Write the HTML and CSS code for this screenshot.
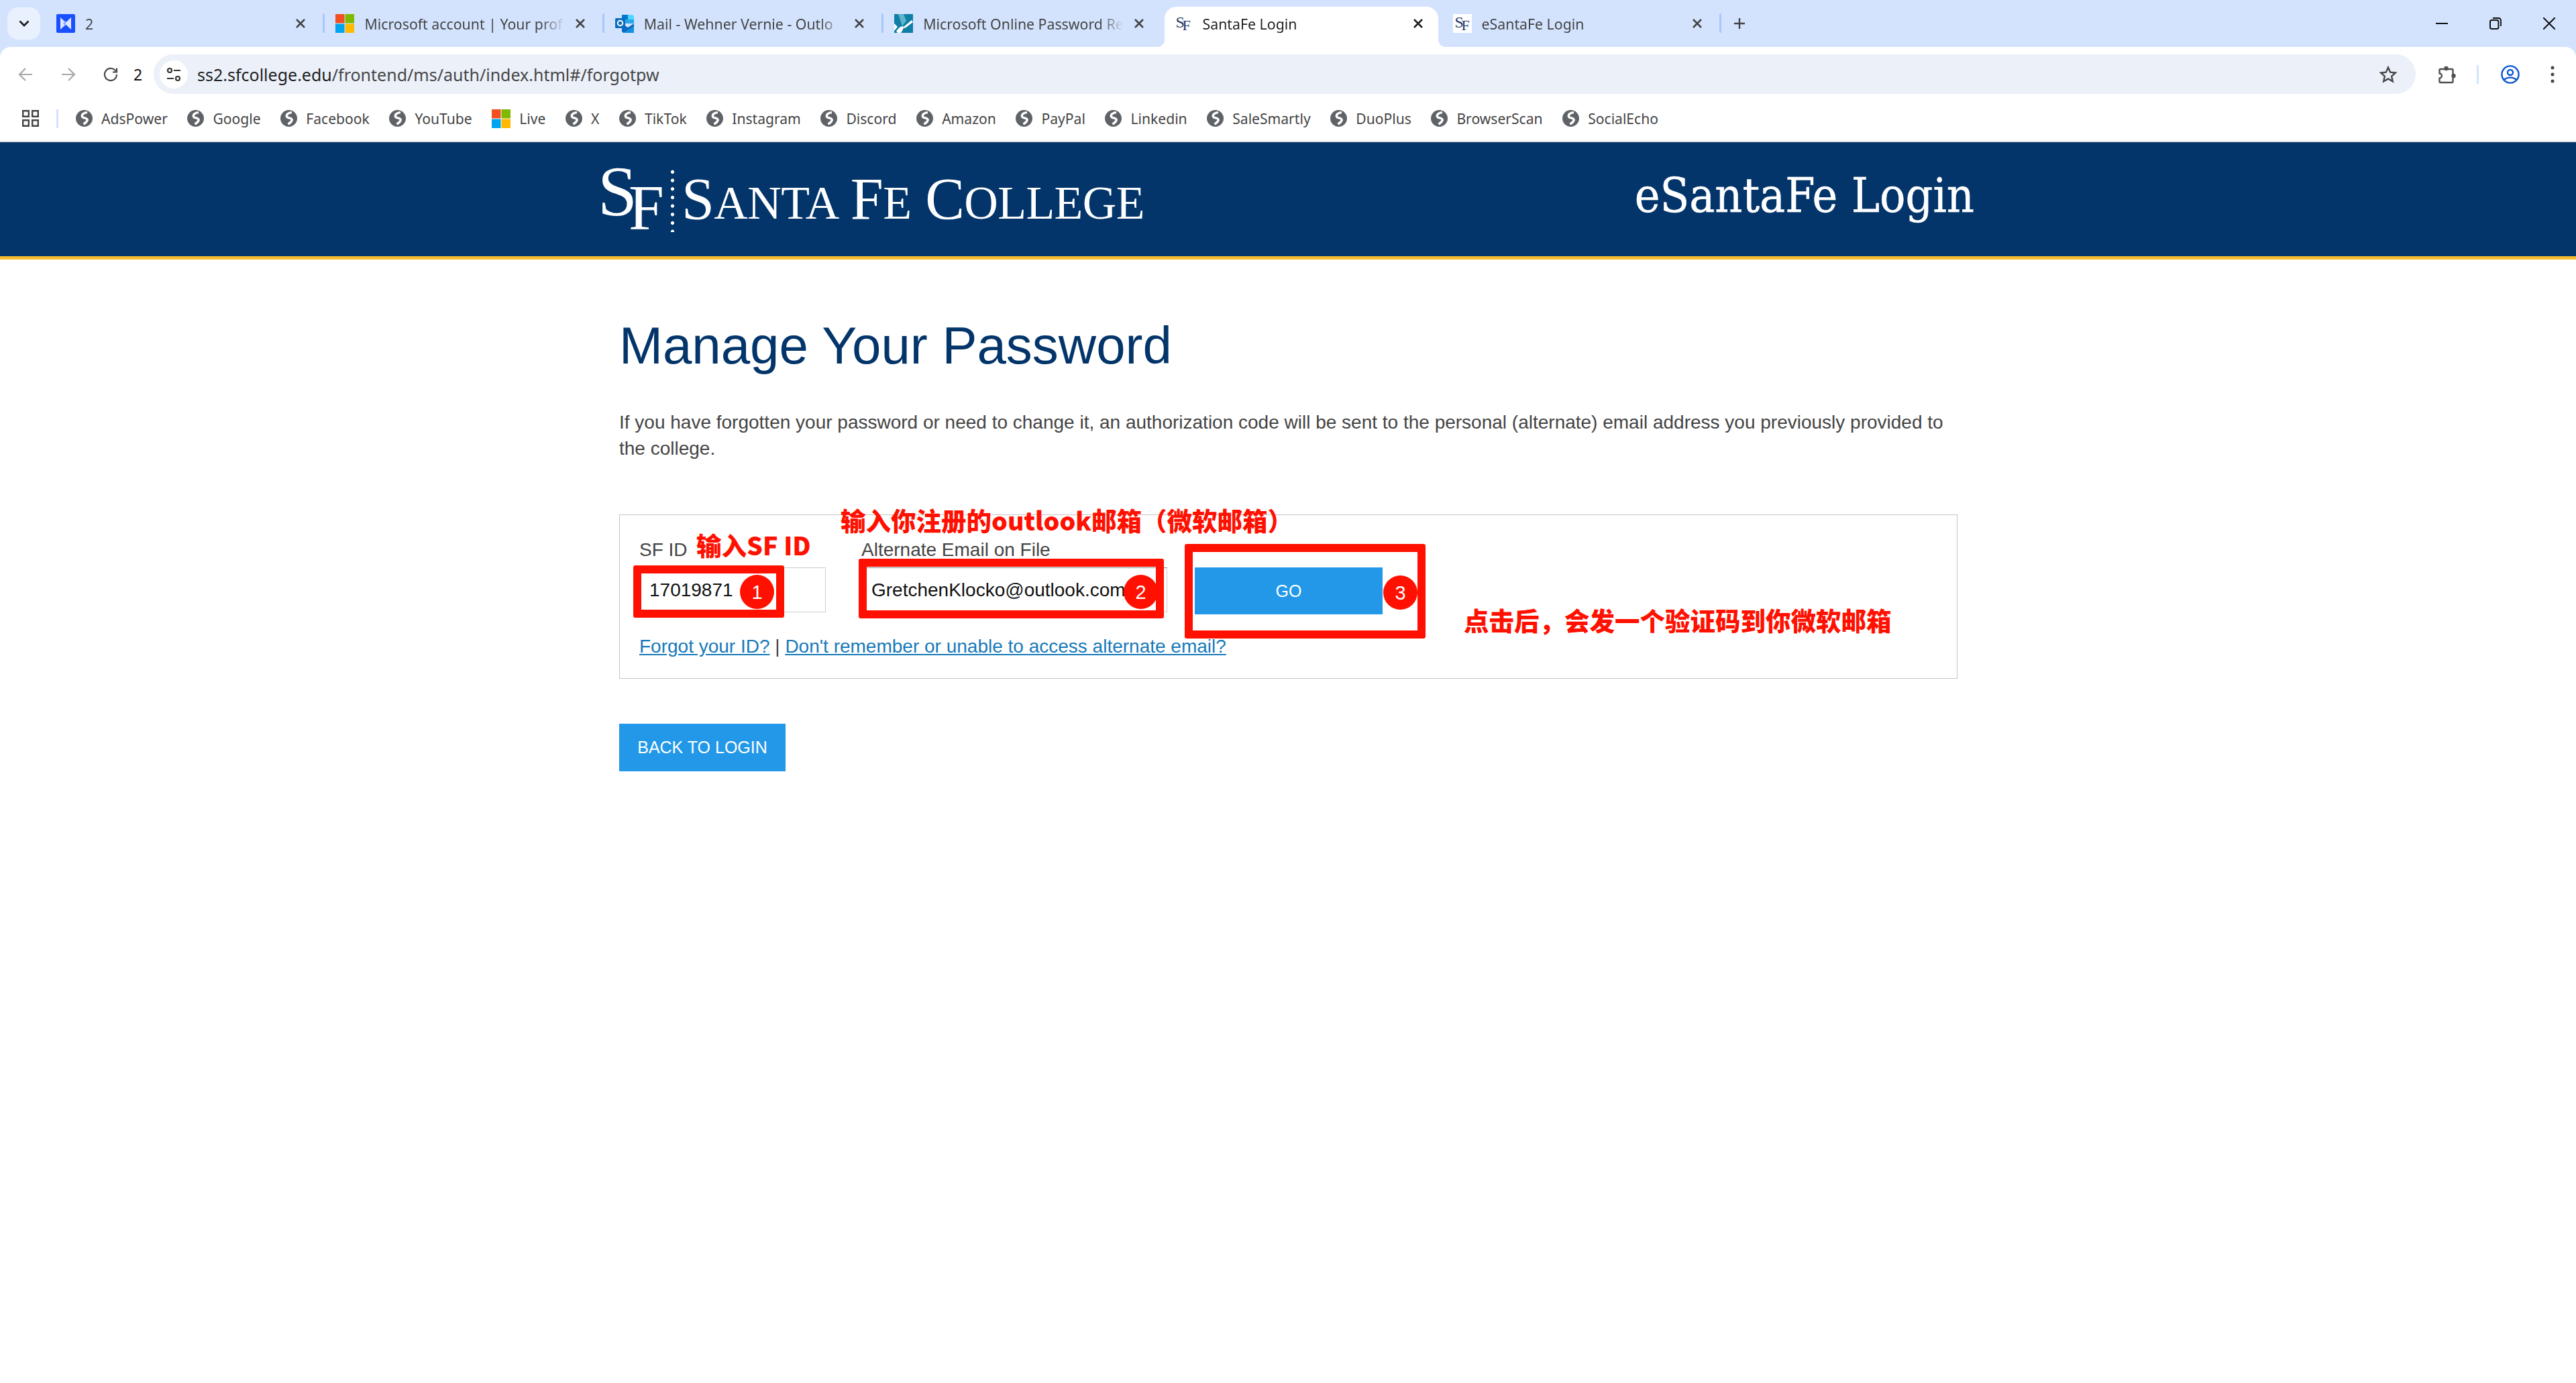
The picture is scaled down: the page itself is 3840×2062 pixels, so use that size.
FILE: index.html
```html
<!DOCTYPE html>
<html lang="en">
<head>
<meta charset="utf-8">
<title>SantaFe Login</title>
<link rel="stylesheet" href="styles.css">
</head>
<body>
<svg class="defs" width="0" height="0" aria-hidden="true">
  <symbol id="globe" viewBox="0 0 25 25">
    <circle cx="12.5" cy="12.5" r="12.5" fill="#5f6368"/>
    <path d="M17 3.6C12 4 8.6 6.6 9.4 9.6c.8 2.9 6.4 1.8 7.6 4.4 1 2.300-2.600 5.400-5.600 7" fill="none" stroke="#fff" stroke-width="3.400"/>
  </symbol>
  <symbol id="ms" viewBox="0 0 28 28">
    <rect width="13.500" height="13.500" fill="#f25022"/>
    <rect x="14.500" width="13.500" height="13.500" fill="#7fba00"/>
    <rect y="14.500" width="13.500" height="13.500" fill="#00a4ef"/>
    <rect x="14.500" y="14.500" width="13.500" height="13.500" fill="#ffb900"/>
  </symbol>
  <symbol id="close" viewBox="0 0 18 18">
    <path d="M3 3l12 12M15 3L3 15" fill="none" stroke="currentColor" stroke-width="2.600"/>
  </symbol>
</svg>

<header class="chrome">
  <div class="tabstrip">
    <div class="tab-list-btn">
      <svg class="chev" viewBox="0 0 16 10"><path d="M1.500 1.500L8 8l6.500-6.500" fill="none" stroke="#1f1f1f" stroke-width="2.800"/></svg>
    </div>
    <div class="tab sep">
      <svg class="fav" viewBox="0 0 28 28"><rect width="28" height="28" rx="2" fill="#1a4fff"/><path d="M6 5l8 7.500L22 5v18l-8-7.500L6 23z" fill="#dfe8ff"/><path d="M14 9.500l-4 4.500 4 4z" fill="#8fa9ff"/></svg>
      <span class="tab-label">2</span>
      <svg class="tab-close"><use href="#close"/></svg>
    </div>
    <div class="tab sep">
      <svg class="fav"><use href="#ms"/></svg>
      <span class="tab-label">Microsoft account | Your prof</span>
      <svg class="tab-close"><use href="#close"/></svg>
    </div>
    <div class="tab sep">
      <svg class="fav" viewBox="0 0 28 28"><path d="M10 1h15l3 3v10H10z" fill="#28a8ea"/><path d="M10 1h9v7h-9z" fill="#0078d4"/><path d="M19 1h6l3 3v4h-9z" fill="#50d9ff"/><path d="M10 14l9 6 9-6v14H12l-2-2z" fill="#0a6ac0"/><path d="M12 28l16-10v10z" fill="#1490df"/><rect y="6" width="15" height="15" rx="1.500" fill="#0f6cbd"/><circle cx="7.500" cy="13.500" r="3.700" fill="none" stroke="#fff" stroke-width="2"/></svg>
      <span class="tab-label">Mail - Wehner Vernie - Outlo</span>
      <svg class="tab-close"><use href="#close"/></svg>
    </div>
    <div class="tab">
      <svg class="fav" viewBox="0 0 28 28"><rect width="28" height="28" fill="#0f7fa6"/><path d="M6 0h8l4 10-6 8z" fill="#5fb4cc"/><path d="M26 9L14 19l-1-1-4 1-6 6 2 3h5l3-5 1-3 2 1L28 12z" fill="#fff"/><path d="M0 14l5 5-5 6z" fill="#fff"/></svg>
      <span class="tab-label">Microsoft Online Password Re</span>
      <svg class="tab-close"><use href="#close"/></svg>
    </div>
    <div class="tab active">
      <span class="fav sf-fav"><span class="sf-s">S</span><span class="sf-f">F</span></span>
      <span class="tab-label">SantaFe Login</span>
      <svg class="tab-close"><use href="#close"/></svg>
    </div>
    <div class="tab sep">
      <span class="fav sf-fav sf-fav-white"><span class="sf-s">S</span><span class="sf-f">F</span></span>
      <span class="tab-label">eSantaFe Login</span>
      <svg class="tab-close"><use href="#close"/></svg>
    </div>
    <svg class="new-tab" viewBox="0 0 20 20"><path d="M10 2v16M2 10h16" fill="none" stroke="#444" stroke-width="2.400"/></svg>
    <div class="window-controls">
      <div class="win-btn"><svg class="win-icon" viewBox="0 0 18 18"><path d="M0 9h18" stroke="#111" stroke-width="2"/></svg></div>
      <div class="win-btn"><svg class="win-icon" viewBox="0 0 18 18"><rect x="1" y="4" width="12.500" height="13" rx="2.500" fill="none" stroke="#111" stroke-width="2"/><path d="M5 1h8c2.500 0 4 1.500 4 4v8" fill="none" stroke="#111" stroke-width="1.800"/></svg></div>
      <div class="win-btn"><svg class="win-icon" viewBox="0 0 18 18"><path d="M0 0l18 18M18 0L0 18" stroke="#111" stroke-width="2"/></svg></div>
    </div>
  </div>

  <div class="toolbar">
    <svg class="nav-icon" viewBox="0 0 22 22"><path d="M21 11H2M11 2l-9 9 9 9" fill="none" stroke="#a8a8a8" stroke-width="2.200"/></svg>
    <svg class="nav-icon nav-gap" viewBox="0 0 22 22"><path d="M1 11h19M11 2l9 9-9 9" fill="none" stroke="#a8a8a8" stroke-width="2.200"/></svg>
    <svg class="nav-icon nav-gap" viewBox="0 0 22 22"><path d="M18.500 6A9 9 0 1 0 20 11M20 1.500V7.500H14" fill="none" stroke="#474747" stroke-width="2.200"/></svg>
    <span class="reload-count">2</span>
    <div class="omnibox">
      <div class="site-info">
        <svg class="site-icon" viewBox="0 0 22 22"><circle cx="5" cy="5" r="3" fill="none" stroke="#333" stroke-width="2.200"/><path d="M11 5h10M1 17h10" stroke="#333" stroke-width="2.200"/><circle cx="17" cy="17" r="3" fill="none" stroke="#333" stroke-width="2.200"/></svg>
      </div>
      <span class="url"><span class="url-host">ss2.sfcollege.edu</span>/frontend/ms/auth/index.html#/forgotpw</span>
      <svg class="star" viewBox="0 0 26 26"><path d="M13 2.500l3.200 7.200 7.800.8-5.900 5.200 1.700 7.700L13 19.400l-6.800 4 1.700-7.700L2 10.500l7.800-.8z" fill="none" stroke="#474747" stroke-width="2.400"/></svg>
    </div>
    <svg class="ext" viewBox="0 0 28 28"><path d="M5 6h17a1.500 1.500 0 0 1 1.500 1.500v17a1.500 1.500 0 0 1-1.500 1.500H5a1.500 1.500 0 0 1-1.500-1.500V19.500a3.500 3.500 0 0 0 0-7V7.500A1.500 1.500 0 0 1 5 6z" fill="none" stroke="#505050" stroke-width="2.400" stroke-linejoin="round"/><circle cx="13.500" cy="5" r="3.200" fill="#505050"/><circle cx="24.500" cy="16" r="3.200" fill="#505050"/></svg>
    <span class="toolbar-sep"></span>
    <svg class="profile" viewBox="0 0 28 28"><circle cx="14" cy="14" r="12.600" fill="none" stroke="#0b57d0" stroke-width="2.400"/><circle cx="14" cy="11" r="4" fill="none" stroke="#0b57d0" stroke-width="2.400"/><path d="M5 22c4-4.500 14-4.500 18 0" fill="none" stroke="#0b57d0" stroke-width="2.400"/></svg>
    <svg class="menu" viewBox="0 0 6 26"><circle cx="3" cy="3" r="2.500" fill="#474747"/><circle cx="3" cy="13" r="2.500" fill="#474747"/><circle cx="3" cy="23" r="2.500" fill="#474747"/></svg>
  </div>

  <nav class="bookmarks">
    <svg class="apps" viewBox="0 0 25 25"><path d="M1.200 1.200h8.600v8.600H1.200zM15.200 1.200h8.600v8.600h-8.600zM1.200 15.200h8.600v8.600H1.200zM15.200 15.200h8.600v8.600h-8.600z" fill="none" stroke="#444" stroke-width="2.400"/></svg>
    <span class="bm-sep"></span>
    <a class="bm"><svg class="bm-icon"><use href="#globe"/></svg>AdsPower</a>
    <a class="bm"><svg class="bm-icon"><use href="#globe"/></svg>Google</a>
    <a class="bm"><svg class="bm-icon"><use href="#globe"/></svg>Facebook</a>
    <a class="bm"><svg class="bm-icon"><use href="#globe"/></svg>YouTube</a>
    <a class="bm"><svg class="bm-icon bm-ms"><use href="#ms"/></svg>Live</a>
    <a class="bm"><svg class="bm-icon"><use href="#globe"/></svg>X</a>
    <a class="bm"><svg class="bm-icon"><use href="#globe"/></svg>TikTok</a>
    <a class="bm"><svg class="bm-icon"><use href="#globe"/></svg>Instagram</a>
    <a class="bm"><svg class="bm-icon"><use href="#globe"/></svg>Discord</a>
    <a class="bm"><svg class="bm-icon"><use href="#globe"/></svg>Amazon</a>
    <a class="bm"><svg class="bm-icon"><use href="#globe"/></svg>PayPal</a>
    <a class="bm"><svg class="bm-icon"><use href="#globe"/></svg>Linkedin</a>
    <a class="bm"><svg class="bm-icon"><use href="#globe"/></svg>SaleSmartly</a>
    <a class="bm"><svg class="bm-icon"><use href="#globe"/></svg>DuoPlus</a>
    <a class="bm"><svg class="bm-icon"><use href="#globe"/></svg>BrowserScan</a>
    <a class="bm"><svg class="bm-icon"><use href="#globe"/></svg>SocialEcho</a>
  </nav>
</header>

<div class="site-header">
  <div class="logo">
    <span class="logo-s">S</span>
    <span class="logo-f">F</span>
    <span class="logo-dots"></span>
    <span class="logo-name"><span class="big">S</span>ANTA <span class="big">F</span>E <span class="big">C</span>OLLEGE</span>
  </div>
  <div class="site-title">eSantaFe Login</div>
</div>

<main class="content">
  <h1 class="page-title">Manage Your Password</h1>
  <p class="intro">If you have forgotten your password or need to change it, an authorization code will be sent to the personal (alternate) email address you previously provided to the college.</p>
  <section class="form-box">
    <div class="form-row">
      <div class="field field-id">
        <div class="field-label">SF ID</div>
        <div class="input">17019871</div>
      </div>
      <div class="field field-email">
        <div class="field-label">Alternate Email on File</div>
        <div class="input input-email">GretchenKlocko@outlook.com</div>
      </div>
      <div class="btn btn-go">GO</div>
    </div>
    <div class="help-links"><a class="link">Forgot your ID?</a> | <a class="link">Don't remember or unable to access alternate email?</a></div>
  </section>
  <div class="btn btn-back">BACK TO LOGIN</div>
</main>

<div class="annotations">
  <div class="red-box box-1"></div>
  <div class="red-box box-2"></div>
  <div class="red-box box-3"></div>
  <div class="num num-1">1</div>
  <div class="num num-2">2</div>
  <div class="num num-3">3</div>
  <div class="note note-1">输入SF ID</div>
  <div class="note note-2">输入你注册的outlook邮箱（微软邮箱）</div>
  <div class="note note-3">点击后，会发一个验证码到你微软邮箱</div>
</div>
</body>
</html>
```
FILE: styles.css
```css
* { box-sizing: border-box; }
html, body { margin: 0; padding: 0; background: #fff; }
body { font-family: "Liberation Sans", Arial, sans-serif; position: relative; min-height: 2062px; overflow: hidden; }
.defs { position: absolute; }

/* browser chrome */
.chrome { background: #d3e3fd; font-family: "Noto Sans", "Open Sans", sans-serif; }
.tabstrip { display: flex; height: 70px; }
.tab-list-btn { width: 49px; height: 48px; margin: 11px 6px 0 11px; background: #eaf1fe; border-radius: 16px; display: flex; align-items: center; justify-content: center; flex: none; }
.chev { width: 16px; height: 10px; }
.tab { position: relative; width: 416.4px; height: 60px; margin-top: 10px; padding: 0 25px 10px 18px; display: flex; align-items: center; flex: none; color: #444; font-size: 21.3px; }
.tab.sep::after { content: ""; position: absolute; right: -2px; top: 10px; width: 3px; height: 29px; background: #a8c7fa; border-radius: 2px; }
.tab.active { width: 408px; margin-left: 4px; margin-right: 4px; padding-left: 14px; padding-right: 21px; background: #fff; color: #1f1f1f; border-radius: 18px 18px 0 0; }
.tab.active::before, .tab.active::after { content: ""; position: absolute; bottom: 0; width: 12px; height: 12px; }
.tab.active::before { left: -12px; background: radial-gradient(circle at 0 0, transparent 12px, #fff 12.5px); }
.tab.active::after { right: -12px; background: radial-gradient(circle at 100% 0, transparent 12px, #fff 12.5px); }
.fav { width: 28px; height: 28px; flex: none; margin-right: 15px; }
.tab-label { flex: 1; min-width: 0; white-space: nowrap; overflow: hidden; margin-right: 14px; -webkit-mask-image: linear-gradient(to right, #000 calc(100% - 36px), transparent); mask-image: linear-gradient(to right, #000 calc(100% - 36px), transparent); }
.tab-close { width: 18px; height: 18px; flex: none; }
.sf-fav { position: relative; display: block; font-family: "Liberation Serif", serif; color: #1f3a6b; overflow: hidden; }
.sf-fav-white { background: #fff; }
.sf-s { position: absolute; left: 3px; top: 0; font-size: 24px; line-height: 24px; }
.sf-f { position: absolute; left: 13px; top: 5px; font-size: 22px; line-height: 24px; }
.new-tab { width: 20px; height: 20px; flex: none; margin: 25px 0 0 19px; }
.window-controls { margin-left: auto; display: flex; height: 70px; }
.win-btn { width: 80px; display: flex; align-items: center; justify-content: center; }
.win-icon { width: 18px; height: 18px; }

.toolbar { display: flex; align-items: center; height: 70px; padding: 11px 0 0 27px; background: #fff; border-radius: 16px 16px 0 0; }
.nav-icon { width: 22px; height: 22px; flex: none; }
.nav-gap { margin-left: 41.5px; }
.reload-count { margin-left: 23px; width: 12px; font-size: 23px; color: #111; }
.omnibox { flex: none; width: 3372px; height: 59px; margin-left: 18px; background: #ebf0f9; border-radius: 30px; display: flex; align-items: center; padding: 0 28px 0 9px; }
.site-info { width: 42px; height: 42px; border-radius: 50%; background: #fff; display: flex; align-items: center; justify-content: center; }
.site-icon { width: 22px; height: 22px; }
.url { margin-left: 14px; font-size: 25px; color: #474747; flex: 1; white-space: nowrap; }
.url-host { color: #1f1f1f; }
.star { width: 26px; height: 26px; }
.ext { width: 28px; height: 28px; margin-left: 32px; }
.toolbar-sep { width: 3px; height: 28px; margin-left: 31px; background: #d3e3fd; }
.profile { width: 28px; height: 28px; margin-left: 33px; }
.menu { width: 6px; height: 26px; margin-left: 46px; }

.bookmarks { display: flex; align-items: center; height: 70px; padding: 3px 0 0 33px; background: #fff; font-size: 21.1px; color: #444; }
.apps { width: 25px; height: 25px; flex: none; }
.bm-sep { width: 3px; height: 28px; margin: 0 26px; background: #d3e3fd; flex: none; }
.bm { display: flex; align-items: center; gap: 13px; margin-right: 29.6px; flex: none; }
.bm-icon { width: 25px; height: 25px; flex: none; }
.bm-ms { width: 28px; height: 28px; }

/* site header */
.site-header { height: 177px; background: #03356a; border-top: 2px solid #e0e0e0; border-bottom: 5px solid #f6bc30; padding: 0 897px; display: flex; justify-content: space-between; color: #fff; }
.logo { display: flex; align-items: flex-start; font-family: "Liberation Serif", serif; line-height: 1; margin-left: -6px; }
.logo-s { font-size: 106px; margin-top: 21px; width: 46px; letter-spacing: -13px; }
.logo-f { font-size: 95px; margin-top: 51px; width: 47px; }
.logo-dots { width: 5px; height: 96px; margin: 38px 0 0 16px; background: radial-gradient(ellipse 2.5px 3px, #fff 90%, transparent 100%) repeat-y 0 0 / 5px 12.7px; }
.logo-name { font-size: 70px; line-height: 100px; margin: 35px 0 0 11px; letter-spacing: -.6px; word-spacing: 4px; white-space: nowrap; }
.big { font-size: 88px; }
.site-title { font-family: "DejaVu Serif Condensed", "DejaVu Serif", serif; font-size: 71px; line-height: 80px; margin-top: 40px; white-space: nowrap; -webkit-text-stroke: .5px #fff; }

/* page */
.content { padding: 81px 0 0 923px; width: 2918px; }
.page-title { margin: 0 0 48px; font-size: 78px; font-weight: 400; line-height: 94px; color: #03356a; }
.intro { margin: 0 0 79px; font-size: 28px; line-height: 39px; color: #444; width: 1995px; }
.form-box { width: 1995px; height: 245px; border: 1px solid #c4c4c4; padding: 36px 0 0 29px; }
.form-row { display: flex; align-items: flex-start; }
.field-label { font-size: 28px; line-height: 32px; color: #444; margin-bottom: 10px; }
.field-id { width: 278px; margin-right: 53px; }
.field-email { width: 456px; margin-right: 41px; }
.input { height: 67px; border: 1px solid #ccc; padding-left: 14px; font-size: 28px; line-height: 65px; color: #111; background: #fff; }
.input-email { border-top-color: #888; white-space: nowrap; }
.btn { background: #2398e8; color: #fff; display: flex; align-items: center; justify-content: center; }
.btn-go { width: 280px; height: 70px; margin-top: 42px; font-size: 25px; }
.help-links { margin-top: 30px; font-size: 28px; line-height: 36px; color: #444; }
.link { color: #1779ba; text-decoration: underline; }
.btn-back { width: 248px; height: 71px; margin-top: 67px; font-size: 25px; }

/* red annotations drawn over the page */
.annotations { position: absolute; inset: 0; pointer-events: none; color: #ff1000; }
.red-box { position: absolute; border: 12px solid #ff1000; border-radius: 3px; }
.box-1 { left: 944px; top: 843px; width: 225px; height: 78px; }
.box-2 { left: 1280px; top: 833px; width: 455px; height: 89px; }
.box-3 { left: 1766px; top: 811px; width: 359px; height: 141px; }
.num { position: absolute; width: 51px; height: 51px; border-radius: 50%; background: #ff1000; color: #fff; font-size: 29px; line-height: 53px; text-align: center; }
.num-1 { left: 1103px; top: 857px; }
.num-2 { left: 1675px; top: 857px; }
.num-3 { left: 2062px; top: 858px; }
.note { position: absolute; font-family: "Noto Sans CJK SC", "Noto Sans", sans-serif; font-weight: 900; font-size: 37.500px; line-height: 44px; white-space: nowrap; }
.note-1 { left: 1038px; top: 790px; }
.note-2 { left: 1253px; top: 753px; }
.note-3 { left: 2182px; top: 902px; }
```
